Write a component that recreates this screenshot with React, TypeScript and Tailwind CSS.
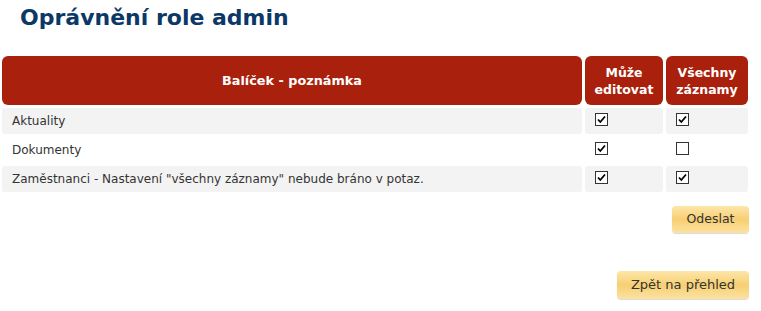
import React from "react";

const font = { fontFamily: '"DejaVu Sans", Verdana, sans-serif' };

function Check({ checked }: { checked: boolean }) {
  return (
    <span className="inline-flex h-[13px] w-[13px] items-center justify-center border border-[#333] bg-white">
      {checked && (
        <svg width="9" height="9" viewBox="0 0 9 9">
          <path d="M1 4.5 L3.3 7 L8 1.5" fill="none" stroke="#000" strokeWidth="1.8" />
        </svg>
      )}
    </span>
  );
}

const rows = [
  { name: "Aktuality", edit: true, all: true, bg: "bg-[#f3f3f3]" },
  { name: "Dokumenty", edit: true, all: false, bg: "bg-white" },
  { name: 'Zaměstnanci - Nastavení "všechny záznamy" nebude bráno v potaz.', edit: true, all: true, bg: "bg-[#f3f3f3]" },
];

export default function App() {
  return (
    <div className="h-[311px] w-[761px] bg-white" style={font}>
      <h1 className="pl-[20px] pt-[4px] text-[22px] font-bold leading-[28px] text-[#0b3866]">Oprávnění role admin</h1>
      <div className="mt-[24px] flex flex-col gap-[3px] pl-[2px] pr-[13px]">
        <div className="flex gap-[3px]">
          <div className="flex h-[49px] flex-1 items-center justify-center rounded-[6px] bg-[#a9200c] text-[12.8px] font-bold text-white">
            Balíček - poznámka
          </div>
          <div className="flex h-[49px] w-[78px] items-center justify-center rounded-[6px] bg-[#a9200c] text-center text-[12.5px] font-bold leading-[17px] text-white">
            Může<br />editovat
          </div>
          <div className="flex h-[49px] w-[82px] items-center justify-center rounded-[6px] bg-[#a9200c] text-center text-[12.5px] font-bold leading-[17px] text-white">
            Všechny<br />záznamy
          </div>
        </div>
        {rows.map((r) => (
          <div key={r.name} className="flex h-[26px] gap-[3px]">
            <div className={`flex flex-1 items-center rounded-[3px] pl-[10px] text-[12px] text-[#333] ${r.bg}`}>{r.name}</div>
            <div className={`flex w-[78px] items-start rounded-[3px] pl-[10px] pt-[5px] ${r.bg}`}>
              <Check checked={r.edit} />
            </div>
            <div className={`flex w-[82px] items-start rounded-[3px] pl-[10px] pt-[5px] ${r.bg}`}>
              <Check checked={r.all} />
            </div>
          </div>
        ))}
      </div>
      <div className="flex flex-col items-end pr-[12px]">
        <button className="mt-[14px] h-[27px] w-[77px] rounded-[4px] bg-gradient-to-b from-[#fde6a8] via-[#f7cf72] to-[#fbe2a0] text-[12.5px] text-[#333] shadow-[0_1px_1px_rgba(0,0,0,0.15)]">
          Odeslat
        </button>
        <button className="mt-[38px] h-[28px] w-[132px] rounded-[4px] bg-gradient-to-b from-[#fde6a8] via-[#f7cf72] to-[#fbe2a0] text-[13px] text-[#333] shadow-[0_1px_1px_rgba(0,0,0,0.15)]">
          Zpět na přehled
        </button>
      </div>
    </div>
  );
}
